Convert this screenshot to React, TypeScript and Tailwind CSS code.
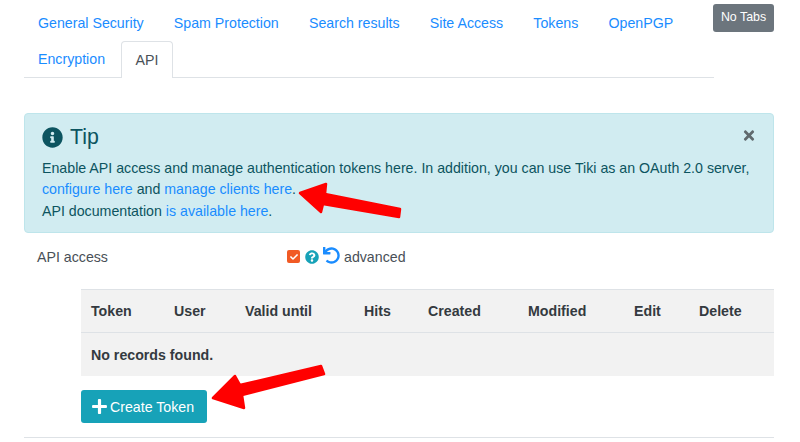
import { FaInfoCircle, FaQuestionCircle, FaPlus, FaUndo, FaTimes, FaCheck } from 'react-icons/fa';

const firstRow = ['General Security', 'Spam Protection', 'Search results', 'Site Access', 'Tokens', 'OpenPGP'];

const columns = [
    { label: 'Token', width: 'w-[83px]' },
    { label: 'User', width: 'w-[71px]' },
    { label: 'Valid until', width: 'w-[119px]' },
    { label: 'Hits', width: 'w-[64px]' },
    { label: 'Created', width: 'w-[100px]' },
    { label: 'Modified', width: 'w-[106px]' },
    { label: 'Edit', width: 'w-[65px]' },
    { label: 'Delete', width: 'w-[85px]' },
];

export default function App() {
    return (
        <div className="relative w-[800px] h-[442px] overflow-hidden bg-white pl-6 pr-[26px] pt-[5px] text-[14.2px] leading-[21.4px] text-[#343a40] font-['Liberation_Sans',Arial,sans-serif]">
            <div className="flex items-start">
                <div className="w-[690px] shrink-0 h-[73px] border-b border-[#dee2e6]">
                    <div className="flex h-9 items-center gap-[30.2px] whitespace-nowrap pl-[14px] pt-[2px]">
                        {firstRow.map(tab => (
                            <a key={tab} className="text-[#1a8cff]">{tab}</a>
                        ))}
                    </div>
                    <div className="flex h-9 whitespace-nowrap pl-[14px]">
                        <a className="w-[83px] leading-9 text-[#1a8cff]">Encryption</a>
                        <a className="h-[37px] w-[52px] rounded-t border border-b-0 border-[#dee2e6] bg-white text-center leading-9 text-[#495057]">API</a>
                    </div>
                </div>
                <button className="-mt-[1px] h-[28px] w-[61px] shrink-0 -ml-[1px] rounded-[3px] bg-[#6c757d] text-[12.4px] text-white">No Tabs</button>
            </div>

            <div className="relative mt-[35px] h-[120px] rounded border border-[#bee5eb] bg-[#d1ecf1] pl-[17px] pt-[10px] text-[#0c5460]">
                <div className="flex items-center gap-[7px] text-[21.3px] leading-[26px]">
                    <FaInfoCircle className="h-[21px] w-[21px]" />
                    <span>Tip</span>
                </div>
                <div className="mt-[8px]">
                    <p>Enable API access and manage authentication tokens here. In addition, you can use Tiki as an OAuth 2.0 server,</p>
                    <p><a className="text-[#1a8cff]">configure here</a> and <a className="text-[#1a8cff]">manage clients here</a>.</p>
                    <p>API documentation <a className="text-[#1a8cff]">is available here</a>.</p>
                </div>
                <FaTimes className="absolute right-[18px] top-[14px] h-[15px] w-[12px] text-[#60696d]" />
            </div>

            <div className="flex h-[50px] items-center pb-[1px]">
                <span className="ml-[13px] w-[250px] text-[#495057]">API access</span>
                <span className="flex h-[13px] w-[13px] -translate-y-[1px] items-center justify-center rounded-[2px] bg-[#f15a24] text-white">
                    <FaCheck className="h-2 w-2" />
                </span>
                <FaQuestionCircle className="ml-[5px] h-[14px] w-[14px] -translate-y-[1px] text-[#17a2b8]" />
                <FaUndo className="ml-[4px] h-[17px] w-[17px] -translate-y-[2px] text-[#1a8cff]" />
                <span className="ml-[4px] text-[#495057]">advanced</span>
            </div>

            <div className="ml-[57px] mt-[6px]">
                <table className="w-[693px] table-fixed border-collapse bg-[#f2f2f2]">
                    <thead>
                        <tr className="h-[43px] border-y border-[#dee2e6]">
                            {columns.map(col => (
                                <th key={col.label} className={`${col.width} px-[10px] pt-[2px] text-left font-bold`}>{col.label}</th>
                            ))}
                        </tr>
                    </thead>
                    <tbody>
                        <tr className="h-[43px]">
                            <td colSpan={8} className="px-[10px] pt-[2px] font-bold">No records found.</td>
                        </tr>
                    </tbody>
                </table>
                <button className="mt-[14px] flex h-[33px] w-[126px] items-center rounded-[3px] bg-[#17a2b8] pl-[11px] text-white">
                    <FaPlus className="h-[17px] w-[15px]" />
                    <span className="ml-[3px] pt-[3px]">Create Token</span>
                </button>
            </div>

            <div className="mt-[14px] border-t border-[#dee2e6]" />

            <svg className="absolute left-0 top-0" width="800" height="442" viewBox="0 0 800 442">
                <polygon points="300,193 326,184 325,194 400,209 399,217 323,204 321,212" fill="#ff0000" stroke="#ff0000" strokeWidth="2.5" strokeLinejoin="round" />
                <polygon points="213,398 235,376 240,385 321,366 324,374 242,395 244,408" fill="#ff0000" stroke="#ff0000" strokeWidth="2.5" strokeLinejoin="round" />
            </svg>
        </div>
    );
}
